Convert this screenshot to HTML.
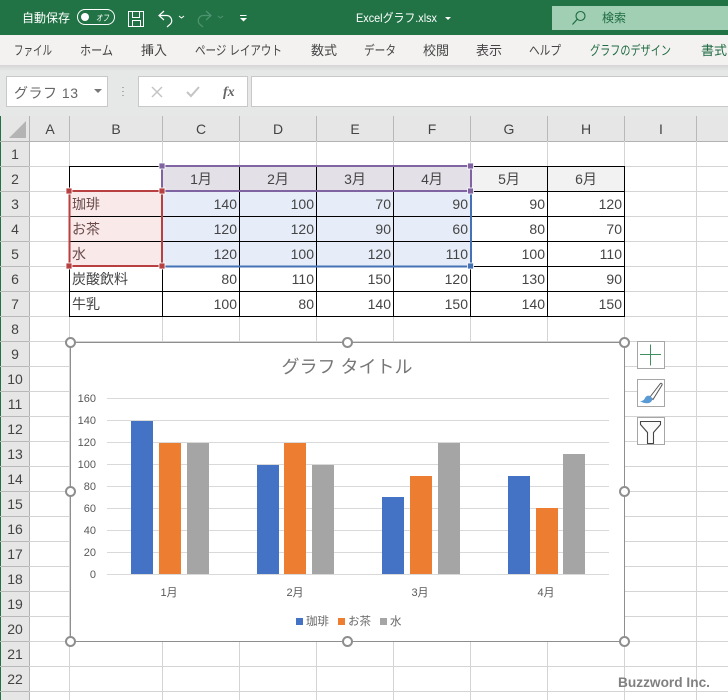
<!DOCTYPE html>
<html><head><meta charset="utf-8">
<style>
html,body{margin:0;padding:0;background:#fff}
svg{display:block;position:absolute;left:0;top:0}
text{font-family:"Liberation Sans","Noto Sans CJK JP",sans-serif}
</style></head><body>
<svg width="728" height="700" viewBox="0 0 728 700" xmlns="http://www.w3.org/2000/svg">
<defs><linearGradient id="sh" x1="0" y1="0" x2="0" y2="1"><stop offset="0" stop-color="#d6d6d6"/><stop offset="1" stop-color="#e6e8e8"/></linearGradient></defs>
<!-- title bar -->
<rect width="728" height="35" fill="#217346"/>
<text x="22" y="22" font-size="12" fill="#fff">自動保存</text>
<rect x="77.500" y="9.500" width="37" height="15" rx="7.500" fill="none" stroke="#fff"/>
<circle cx="85" cy="17" r="4" fill="#fff"/>
<text x="96" y="21" font-size="9" fill="#fff" textLength="13" lengthAdjust="spacingAndGlyphs" font-style="italic">オフ</text>
<g fill="none" stroke="#fff" stroke-width="1"><path d="M128.500 11.500h15v15h-15z"/><path d="M132.500 11.500v6h7v-6M132.500 26.500v-6h8v6"/></g>
<g id="u"><path d="M164 11l-5 4.500 5 4.500M159 15.500h8a5.200 5.200 0 0 1 3.500 8.500l-3.500 3" fill="none" stroke="#fff" stroke-width="1.200"/></g>
<path d="M179 16l2.500 2 2.500-2" fill="none" stroke="#fff"/>
<path transform="translate(370 0) scale(-1 1)" d="M164 11l-5 4.500 5 4.500M159 15.500h8a5.200 5.200 0 0 1 3.500 8.500l-3.500 3" fill="none" stroke="#4f9470" stroke-width="1.200"/>
<path d="M218 16l2.500 2 2.500-2" fill="none" stroke="#4f9470"/>
<path d="M240 15.500h6.500" stroke="#fff"/><path d="M240 18h7l-3.500 3.500z" fill="#fff"/>
<text x="356" y="22" font-size="12" fill="#fff" textLength="81" lengthAdjust="spacingAndGlyphs">Excelグラフ.xlsx</text>
<path d="M445 17h6l-3 3z" fill="#fff"/>
<rect x="552" y="6" width="176" height="24" fill="#a0cfb3"/>
<circle cx="580.500" cy="16" r="4.500" fill="none" stroke="#1d6a40" stroke-width="1.100"/>
<path d="M577 19.500l-4.500 5" stroke="#1d6a40" stroke-width="1.200"/>
<text x="602" y="22" font-size="12" fill="#1f6b42">検索</text>
<!-- ribbon tabs -->
<rect y="35" width="728" height="30" fill="#f3f2f1"/>
<g font-size="13" fill="#444">
<text x="14" y="55" textLength="38" lengthAdjust="spacingAndGlyphs">ファイル</text>
<text x="80" y="55" textLength="33" lengthAdjust="spacingAndGlyphs">ホーム</text>
<text x="141" y="55">挿入</text>
<text x="195" y="55" textLength="87" lengthAdjust="spacingAndGlyphs">ページ レイアウト</text>
<text x="311" y="55">数式</text>
<text x="364" y="55" textLength="32" lengthAdjust="spacingAndGlyphs">データ</text>
<text x="423" y="55">校閲</text>
<text x="476" y="55">表示</text>
<text x="529" y="55" textLength="32" lengthAdjust="spacingAndGlyphs">ヘルプ</text>
<text x="590" y="55" fill="#1f6b42" textLength="81" lengthAdjust="spacingAndGlyphs">グラフのデザイン</text>
<text x="701" y="55" fill="#1f6b42">書式</text>
</g>
<!-- formula bar -->
<rect y="65" width="728" height="51" fill="#e6e8e8"/>
<rect y="65" width="728" height="6" fill="url(#sh)"/>
<rect x="6.500" y="76.500" width="101" height="30" fill="#fff" stroke="#c8c8c8"/>
<text x="14" y="98" font-size="14" fill="#666" textLength="64" lengthAdjust="spacing">グラフ 13</text>
<path d="M94 89h8l-4 4z" fill="#777"/>
<path d="M123 87v1M123 91v1M123 95v1" stroke="#999" stroke-width="1.500"/>
<rect x="138.500" y="76.500" width="109" height="30" fill="#fff" stroke="#c8c8c8"/>
<path d="M152 87l10 10M162 87l-10 10" stroke="#c4c4c4" stroke-width="1.500"/>
<path d="M187 92l4 4 8-9" fill="none" stroke="#c4c4c4" stroke-width="2"/>
<text x="223" y="96" font-size="14" font-style="italic" font-weight="bold" fill="#666" style="font-family:'Liberation Serif',serif">fx</text>
<rect x="251.500" y="76.500" width="477" height="30" fill="#fff" stroke="#c8c8c8"/>
<!-- sheet headers -->
<rect x="0" y="116" width="728" height="25" fill="#e6e6e6"/>
<rect x="0" y="116" width="29" height="584" fill="#e6e6e6"/>
<rect x="0" y="116" width="1" height="584" fill="#217346"/>
<path d="M9 138L26 121V138Z" fill="#b4b4b4"/>
<g stroke="#b2b2b2"><path d="M0 141.500H728"/><path d="M29.500 116V700"/></g>
<!-- grid -->
<g stroke="#d4d4d4" fill="none">
<path d="M29 166.500H728M29 191.500H728M29 216.500H728M29 241.500H728M29 266.500H728M29 291.500H728M29 316.500H728M29 341.500H728M29 366.500H728M29 391.500H728M29 416.500H728M29 441.500H728M29 466.500H728M29 491.500H728M29 516.500H728M29 541.500H728M29 566.500H728M29 591.500H728M29 616.500H728M29 641.500H728M29 666.500H728M29 691.500H728"/>
<path d="M69.500 141V700M162.500 141V700M239.500 141V700M316.500 141V700M393.500 141V700M470.500 141V700M547.500 141V700M624.500 141V700M696.500 141V700"/>
</g>
<g stroke="#b8b8b8"><path d="M69.500 116V141M162.500 116V141M239.500 116V141M316.500 116V141M393.500 116V141M470.500 116V141M547.500 116V141M624.500 116V141M696.500 116V141"/>
<path d="M0 166.500H29M0 191.500H29M0 216.500H29M0 241.500H29M0 266.500H29M0 291.500H29M0 316.500H29M0 341.500H29M0 366.500H29M0 391.500H29M0 416.500H29M0 441.500H29M0 466.500H29M0 491.500H29M0 516.500H29M0 541.500H29M0 566.500H29M0 591.500H29M0 616.500H29M0 641.500H29M0 666.500H29M0 691.500H29"/></g>
<g font-size="14" fill="#444" text-anchor="middle">
<text x="50" y="134">A</text><text x="116" y="134">B</text><text x="201" y="134">C</text><text x="278" y="134">D</text><text x="355" y="134">E</text><text x="432" y="134">F</text><text x="509" y="134">G</text><text x="586" y="134">H</text><text x="661" y="134">I</text>
<text x="15" y="159">1</text><text x="15" y="184">2</text><text x="15" y="209">3</text><text x="15" y="234">4</text><text x="15" y="259">5</text><text x="15" y="284">6</text><text x="15" y="309">7</text><text x="15" y="334">8</text><text x="15" y="359">9</text><text x="15" y="384">10</text><text x="15" y="409">11</text><text x="15" y="434">12</text><text x="15" y="459">13</text><text x="15" y="484">14</text><text x="15" y="509">15</text><text x="15" y="534">16</text><text x="15" y="559">17</text><text x="15" y="584">18</text><text x="15" y="609">19</text><text x="15" y="634">20</text><text x="15" y="659">21</text><text x="15" y="684">22</text>
</g>
<!-- table fills -->
<rect x="70" y="167" width="92" height="24" fill="#fff"/>
<rect x="162" y="167" width="308" height="24" fill="#e4e0e8"/>
<rect x="470" y="167" width="154" height="24" fill="#f2f2f2"/>
<rect x="70" y="191" width="92" height="75" fill="#f9e9e9"/>
<rect x="162" y="191" width="308" height="75" fill="#e6edf8"/>
<rect x="162" y="266" width="462" height="50" fill="#fff"/>
<rect x="470" y="191" width="154" height="75" fill="#fff"/>
<rect x="70" y="266" width="92" height="50" fill="#fff"/>
<!-- table lines -->
<g stroke="#000" fill="none">
<path d="M69.500 166.500H624.500M69.500 191.500H624.500M69.500 216.500H624.500M69.500 241.500H624.500M69.500 266.500H624.500M69.500 291.500H624.500M69.500 316.500H624.500"/>
<path d="M69.500 166V317M162.500 166V317M239.500 166V317M316.500 166V317M393.500 166V317M470.500 166V317M547.500 166V317M624.500 166V317"/>
</g>
<!-- table text -->
<g font-size="14" fill="#444" text-anchor="middle">
<text x="201" y="184">1月</text><text x="278" y="184">2月</text><text x="355" y="184">3月</text><text x="432" y="184">4月</text><text x="509" y="184">5月</text><text x="586" y="184">6月</text>
</g>
<g font-size="14" fill="#444">
<text x="72" y="209" fill="#6b4a4a">珈琲</text><text x="72" y="234" fill="#6b4a4a">お茶</text><text x="72" y="259" fill="#6b4a4a">水</text><text x="72" y="284">炭酸飲料</text><text x="72" y="309">牛乳</text>
</g>
<g font-size="14" fill="#444" text-anchor="end">
<text x="237" y="209">140</text><text x="314" y="209">100</text><text x="391" y="209">70</text><text x="468" y="209">90</text><text x="545" y="209">90</text><text x="622" y="209">120</text>
<text x="237" y="234">120</text><text x="314" y="234">120</text><text x="391" y="234">90</text><text x="468" y="234">60</text><text x="545" y="234">80</text><text x="622" y="234">70</text>
<text x="237" y="259">120</text><text x="314" y="259">100</text><text x="391" y="259">120</text><text x="468" y="259">110</text><text x="545" y="259">100</text><text x="622" y="259">110</text>
<text x="237" y="284">80</text><text x="314" y="284">110</text><text x="391" y="284">150</text><text x="468" y="284">120</text><text x="545" y="284">130</text><text x="622" y="284">90</text>
<text x="237" y="309">100</text><text x="314" y="309">80</text><text x="391" y="309">140</text><text x="468" y="309">150</text><text x="545" y="309">140</text><text x="622" y="309">150</text>
</g>
<!-- range selections -->
<g fill="none" stroke-width="2">
<rect x="162" y="166" width="309" height="25" stroke="#8064a2"/>
<path d="M162 192V266.500H471V192" stroke="#4472b4" />
<rect x="69.500" y="191" width="92.500" height="75" stroke="#b84040"/>
</g>
<g fill="#8064a2" stroke="#fff" stroke-width=".8"><rect x="159" y="163" width="6" height="6"/><rect x="467.500" y="163" width="6" height="6"/><rect x="467.500" y="188" width="6" height="6"/></g>
<rect x="467.500" y="263" width="6" height="6" fill="#4472b4" stroke="#fff" stroke-width=".8"/>
<g fill="#b84040" stroke="#fff" stroke-width=".8"><rect x="66" y="188" width="6" height="6"/><rect x="159" y="188" width="6" height="6"/><rect x="66" y="263" width="6" height="6"/><rect x="159" y="263" width="6" height="6"/></g>
<!-- chart -->
<rect x="70.500" y="342.500" width="554" height="299" fill="#fff" stroke="#8e8e8e"/>
<text x="347" y="373" font-size="18" fill="#777" text-anchor="middle">グラフ タイトル</text>
<g stroke="#d9d9d9"><path d="M107 398.500H609M107 420.500H609M107 442.500H609M107 464.500H609M107 486.500H609M107 508.500H609M107 530.500H609M107 552.500H609M107 574.500H609"/></g>
<g font-size="11" fill="#595959" text-anchor="end">
<text x="96" y="402">160</text><text x="96" y="424">140</text><text x="96" y="446">120</text><text x="96" y="468">100</text><text x="96" y="490">80</text><text x="96" y="512">60</text><text x="96" y="534">40</text><text x="96" y="556">20</text><text x="96" y="578">0</text>
</g>
<g fill="#4472c4"><rect x="131" y="421" width="22" height="153"/><rect x="257" y="465" width="22" height="109"/><rect x="382" y="497" width="22" height="77"/><rect x="508" y="476" width="22" height="98"/></g>
<g fill="#ed7d31"><rect x="159" y="443" width="22" height="131"/><rect x="284" y="443" width="22" height="131"/><rect x="410" y="476" width="22" height="98"/><rect x="536" y="508" width="22" height="66"/></g>
<g fill="#a5a5a5"><rect x="187" y="443" width="22" height="131"/><rect x="312" y="465" width="22" height="109"/><rect x="438" y="443" width="22" height="131"/><rect x="563" y="454" width="22" height="120"/></g>
<g font-size="11" fill="#595959" text-anchor="middle"><text x="169" y="596">1月</text><text x="295" y="596">2月</text><text x="420" y="596">3月</text><text x="546" y="596">4月</text></g>
<rect x="296" y="618" width="7" height="7" fill="#4472c4"/><text x="306" y="625" font-size="11.500" fill="#666">珈琲</text>
<rect x="338" y="618" width="7" height="7" fill="#ed7d31"/><text x="348" y="625" font-size="11.500" fill="#666">お茶</text>
<rect x="380" y="618" width="7" height="7" fill="#a5a5a5"/><text x="390" y="625" font-size="11.500" fill="#666">水</text>
<!-- handles -->
<g fill="#fff" stroke="#8e8e8e" stroke-width="2">
<circle cx="70.500" cy="342.500" r="4.500"/><circle cx="347.500" cy="342.500" r="4.500"/><circle cx="624.500" cy="342.500" r="4.500"/>
<circle cx="70.500" cy="491.500" r="4.500"/><circle cx="624.500" cy="491.500" r="4.500"/>
<circle cx="70.500" cy="641.500" r="4.500"/><circle cx="347.500" cy="641.500" r="4.500"/><circle cx="624.500" cy="641.500" r="4.500"/>
</g>
<!-- chart buttons -->
<g fill="#fff" stroke="#a6a6a6"><rect x="637.500" y="341.500" width="27" height="27"/><rect x="637.500" y="379.500" width="27" height="27"/><rect x="637.500" y="417.500" width="27" height="27"/></g>
<path d="M650.500 344.500v21M640 354.500h21" stroke="#3f8f61" fill="none"/>
<path d="M650 397l10-13c1-1.500 2.500-.5 2 1l-9 14.500z" fill="#fff" stroke="#555" stroke-width="1"/>
<path d="M640 401c3 0 4-1 5-3 1-2 3-3 5-2l2 2c1 2-1 4.500-3 5-3 .7-6 0-9-2z" fill="#5b9bd5"/>
<path d="M640.500 421.500h20v3l-7 8v11h-6v-11l-7-8z" fill="#fafafa" stroke="#444" stroke-width="1.100"/>
<!-- watermark -->
<text x="618" y="687" font-size="14" font-weight="bold" fill="#808080" textLength="92" lengthAdjust="spacingAndGlyphs">Buzzword Inc.</text>
</svg>
</body></html>
